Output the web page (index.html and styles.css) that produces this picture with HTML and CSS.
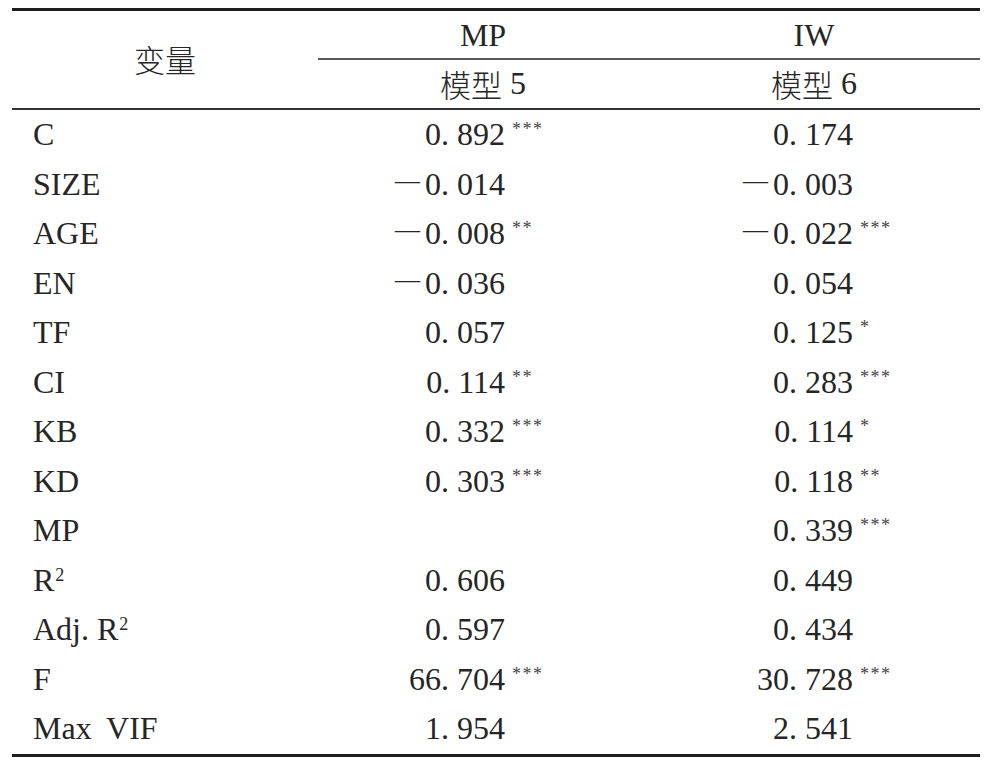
FILE: index.html
```html
<!DOCTYPE html>
<html lang="en">
<head>
<meta charset="utf-8">
<link rel="stylesheet" href="styles.css">
</head>
<body>
<div class="tbl">
  <div class="head">
    <div class="hvar cjk">变量</div>
    <div class="hgrp">MP</div>
    <div class="hgrp">IW</div>
    <div class="hmod"><span class="cjk">模型</span>&nbsp;5</div>
    <div class="hmod"><span class="cjk">模型</span>&nbsp;6</div>
  </div>
  <div class="body">
    <div class="row"><div class="lab">C</div><div class="num c1"><span class="v">0<span class="d">.</span>892</span><span class="s">***</span></div><div class="num c2"><span class="v">0<span class="d">.</span>174</span></div></div>
    <div class="row"><div class="lab">SIZE</div><div class="num c1"><span class="v"><span class="m">—</span>0<span class="d">.</span>014</span></div><div class="num c2"><span class="v"><span class="m">—</span>0<span class="d">.</span>003</span></div></div>
    <div class="row"><div class="lab">AGE</div><div class="num c1"><span class="v"><span class="m">—</span>0<span class="d">.</span>008</span><span class="s">**</span></div><div class="num c2"><span class="v"><span class="m">—</span>0<span class="d">.</span>022</span><span class="s">***</span></div></div>
    <div class="row"><div class="lab">EN</div><div class="num c1"><span class="v"><span class="m">—</span>0<span class="d">.</span>036</span></div><div class="num c2"><span class="v">0<span class="d">.</span>054</span></div></div>
    <div class="row"><div class="lab">TF</div><div class="num c1"><span class="v">0<span class="d">.</span>057</span></div><div class="num c2"><span class="v">0<span class="d">.</span>125</span><span class="s">*</span></div></div>
    <div class="row"><div class="lab">CI</div><div class="num c1"><span class="v">0<span class="d">.</span>114</span><span class="s">**</span></div><div class="num c2"><span class="v">0<span class="d">.</span>283</span><span class="s">***</span></div></div>
    <div class="row"><div class="lab">KB</div><div class="num c1"><span class="v">0<span class="d">.</span>332</span><span class="s">***</span></div><div class="num c2"><span class="v">0<span class="d">.</span>114</span><span class="s">*</span></div></div>
    <div class="row"><div class="lab">KD</div><div class="num c1"><span class="v">0<span class="d">.</span>303</span><span class="s">***</span></div><div class="num c2"><span class="v">0<span class="d">.</span>118</span><span class="s">**</span></div></div>
    <div class="row"><div class="lab">MP</div><div class="num c1"></div><div class="num c2"><span class="v">0<span class="d">.</span>339</span><span class="s">***</span></div></div>
    <div class="row"><div class="lab">R<sup class="sq">2</sup></div><div class="num c1"><span class="v">0<span class="d">.</span>606</span></div><div class="num c2"><span class="v">0<span class="d">.</span>449</span></div></div>
    <div class="row"><div class="lab">Adj. R<sup class="sq">2</sup></div><div class="num c1"><span class="v">0<span class="d">.</span>597</span></div><div class="num c2"><span class="v">0<span class="d">.</span>434</span></div></div>
    <div class="row"><div class="lab">F</div><div class="num c1"><span class="v">66<span class="d">.</span>704</span><span class="s">***</span></div><div class="num c2"><span class="v">30<span class="d">.</span>728</span><span class="s">***</span></div></div>
    <div class="row"><div class="lab"><span class="wide">Max VIF</span></div><div class="num c1"><span class="v">1<span class="d">.</span>954</span></div><div class="num c2"><span class="v">2<span class="d">.</span>541</span></div></div>
  </div>
</div>
</body>
</html>
```
FILE: styles.css
```css
* { box-sizing: border-box; }
html, body { margin: 0; padding: 0; background: #fff; }
body {
  font-family: "Liberation Serif", serif;
  font-size: 32px;
  color: #262626;
}
.cjk {
  font-family: "Noto Sans CJK SC", sans-serif;
  font-weight: 300;
  font-size: 31px;
}
.tbl {
  margin: 8px 12px 0;
  width: 968px;
  border-top: 3px solid #1e1e1e;
  border-bottom: 3px solid #1e1e1e;
}
.head {
  display: grid;
  grid-template-columns: 306px 330px 332px;
  grid-template-rows: 49px 48px;
  border-bottom: 2px solid #333;
}
.hvar {
  grid-row: 1 / 3;
  display: flex;
  align-items: center;
  justify-content: center;
  padding-bottom: 2px;
}
.hgrp {
  display: flex;
  align-items: center;
  justify-content: center;
  border-bottom: 2px solid #5a5a5a;
  padding-top: 1px;
}
.hmod {
  display: flex;
  align-items: center;
  justify-content: center;
  padding-bottom: 2px;
  white-space: nowrap;
}
.row {
  display: grid;
  grid-template-columns: 306px 330px 332px;
  height: 49.5px;
  line-height: 49.5px;
}
.lab { padding-left: 21px; white-space: nowrap; }
.wide { word-spacing: 7px; }
.num { display: flex; align-items: baseline; white-space: nowrap; }
.c1 { padding-left: 77px; }
.c2 { padding-left: 95px; }
.v { width: 110px; text-align: right; }
.d { letter-spacing: 8px; }
.m { font-size: 25px; vertical-align: 6px; line-height: 0; margin-right: 5px; }
.s {
  font-size: 18px;
  letter-spacing: 1.5px;
  margin-left: 7px;
  align-self: flex-start;
  line-height: 1;
  padding-top: 10px;
  color: #444;
}
.sq { font-size: 18px; vertical-align: 10px; line-height: 0; margin-left: 1px; }
```
